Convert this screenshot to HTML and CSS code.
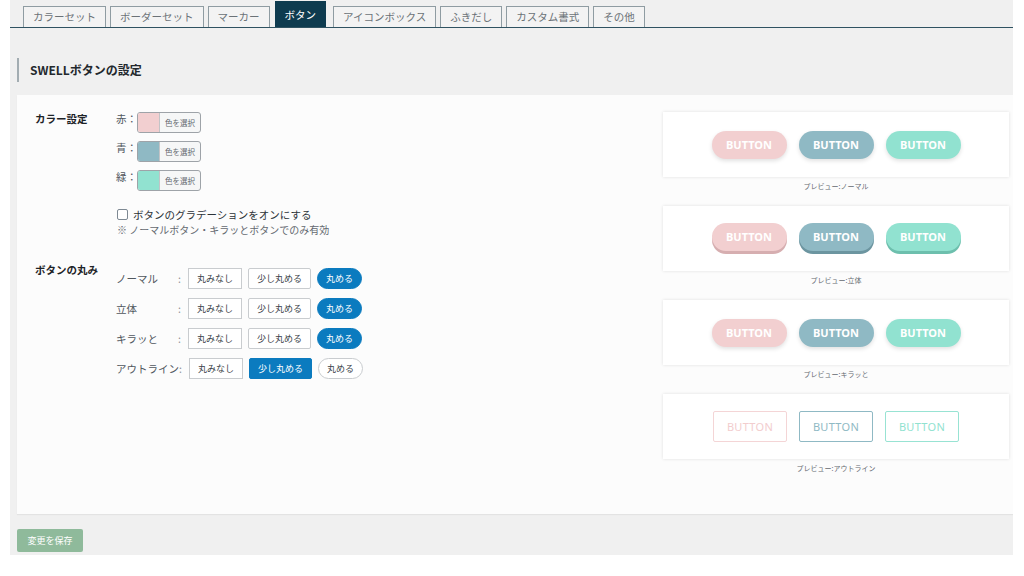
FILE: index.html
```html
<!DOCTYPE html>
<html lang="ja">
<head>
<meta charset="utf-8">
<title>SWELLボタンの設定</title>
<link rel="stylesheet" href="styles.css">
</head>
<body>
<div class="wrap">
  <nav class="tabs">
    <span class="tab">カラーセット</span>
    <span class="tab">ボーダーセット</span>
    <span class="tab">マーカー</span>
    <span class="tab active">ボタン</span>
    <span class="tab">アイコンボックス</span>
    <span class="tab">ふきだし</span>
    <span class="tab">カスタム書式</span>
    <span class="tab">その他</span>
  </nav>

  <h2 class="title">SWELLボタンの設定</h2>

  <section class="panel">
    <div class="settings">
      <div class="field">
        <div class="field-label">カラー設定</div>
        <div class="field-body">
          <div class="color-row">
            <span class="color-name">赤：</span>
            <span class="picker"><span class="swatch red"></span><span class="pick-text">色を選択</span></span>
          </div>
          <div class="color-row">
            <span class="color-name">青：</span>
            <span class="picker"><span class="swatch blue"></span><span class="pick-text">色を選択</span></span>
          </div>
          <div class="color-row">
            <span class="color-name">緑：</span>
            <span class="picker"><span class="swatch green"></span><span class="pick-text">色を選択</span></span>
          </div>
          <label class="check"><span class="box"></span>ボタンのグラデーションをオンにする</label>
          <p class="note">※ ノーマルボタン・キラッとボタンでのみ有効</p>
        </div>
      </div>

      <div class="field round">
        <div class="field-label">ボタンの丸み</div>
        <div class="field-body rows">
          <div class="r-row">
            <span class="r-name">ノーマル</span><span class="colon">:</span>
            <span class="opt sq">丸みなし</span><span class="opt sl">少し丸める</span><span class="opt pill on">丸める</span>
          </div>
          <div class="r-row">
            <span class="r-name">立体</span><span class="colon">:</span>
            <span class="opt sq">丸みなし</span><span class="opt sl">少し丸める</span><span class="opt pill on">丸める</span>
          </div>
          <div class="r-row">
            <span class="r-name">キラッと</span><span class="colon">:</span>
            <span class="opt sq">丸みなし</span><span class="opt sl">少し丸める</span><span class="opt pill on">丸める</span>
          </div>
          <div class="r-row">
            <span class="r-name">アウトライン</span><span class="colon">:</span>
            <span class="opt sq">丸みなし</span><span class="opt sl on">少し丸める</span><span class="opt pill">丸める</span>
          </div>
        </div>
      </div>
    </div>

    <div class="previews">
      <div class="pcard">
        <span class="btn red">BUTTON</span><span class="btn blue">BUTTON</span><span class="btn green">BUTTON</span>
      </div>
      <div class="caption">プレビュー:ノーマル</div>

      <div class="pcard solid">
        <span class="btn red">BUTTON</span><span class="btn blue">BUTTON</span><span class="btn green">BUTTON</span>
      </div>
      <div class="caption">プレビュー:立体</div>

      <div class="pcard">
        <span class="btn red">BUTTON</span><span class="btn blue">BUTTON</span><span class="btn green">BUTTON</span>
      </div>
      <div class="caption">プレビュー:キラッと</div>

      <div class="pcard line">
        <span class="obtn red">BUTTON</span><span class="obtn blue">BUTTON</span><span class="obtn green">BUTTON</span>
      </div>
      <div class="caption">プレビュー:アウトライン</div>
    </div>
  </section>

  <button class="save" type="button">変更を保存</button>
</div>
</body>
</html>
```

FILE: styles.css
```css
* { box-sizing: border-box; }

body {
  margin: 0;
  background: #fff;
  font-family: "Noto Sans CJK JP", "Noto Sans", sans-serif;
  color: #3c434a;
}

.wrap {
  margin-left: 10px;
  width: 1003px;
  height: 555px;
  background: #f0f0f0;
  overflow: hidden;
}

/* tabs */
.tabs {
  display: flex;
  align-items: flex-end;
  gap: 4px;
  height: 28px;
  padding-left: 13px;
  border-bottom: 1px solid #2f5261;
}
.tab {
  height: 21px;
  line-height: 19px;
  padding: 0 9px;
  border: 1px solid #8f9ca2;
  border-bottom: none;
  background: #f3f3f3;
  font-size: 10.5px;
  color: #6b7277;
  white-space: nowrap;
}
.tab.active {
  height: 26px;
  line-height: 25px;
  margin: 0 3px 0 1px;
  background: #0e3b4f;
  border-color: #0e3b4f;
  color: #fff;
}

/* header */
.title {
  margin: 30px 0 0 7px;
  height: 24px;
  line-height: 24px;
  padding-left: 11px;
  border-left: 2px solid #a3adb2;
  font-size: 12px;
  font-weight: bold;
  color: #23282d;
}

/* panel */
.panel {
  display: flex;
  margin: 13px 0 0 7px;
  width: 996px;
  height: 419px;
  background: #fcfcfc;
  box-shadow: 0 1px 1px rgba(0,0,0,.05);
}

.settings {
  flex: 1;
  padding: 17px 0 0 18px;
}
.field {
  display: flex;
  align-items: flex-start;
}
.field-label {
  width: 81px;
  line-height: 14px;
  font-size: 10.5px;
  font-weight: bold;
  color: #1d2327;
}
.field-body { flex: 1; }

.color-row {
  display: flex;
  align-items: flex-start;
  height: 21px;
  margin-bottom: 8px;
}
.color-name {
  width: 21px;
  line-height: 14px;
  font-size: 10.5px;
  color: #50575e;
}
.picker {
  display: flex;
  width: 64px;
  height: 21px;
  border: 1px solid #9ea3a8;
  border-radius: 3px;
  background: #f6f7f7;
  overflow: hidden;
}
.swatch {
  width: 22px;
  border-right: 1px solid #c3c4c7;
}
.swatch.red { background: #f2cfd0; }
.swatch.blue { background: #8fb9c4; }
.swatch.green { background: #91e2d0; }
.pick-text {
  flex: 1;
  text-align: center;
  font-size: 7.5px;
  line-height: 19px;
  color: #646970;
}

.check {
  display: flex;
  align-items: center;
  margin-top: 15px;
  height: 16px;
  font-size: 10.5px;
  color: #2c3338;
}
.box {
  width: 11px;
  height: 11px;
  margin: 0 5px 0 1px;
  border: 1px solid #7e8993;
  border-radius: 2px;
  background: #fff;
}
.note {
  margin: 0 0 0 1px;
  line-height: 16px;
  font-size: 10px;
  color: #646970;
}

.field.round { margin-top: 25px; }
.rows { padding-top: 5px; }
.r-row {
  display: flex;
  align-items: center;
  height: 21px;
  margin-bottom: 9px;
  font-size: 10.5px;
  color: #50575e;
  white-space: nowrap;
}
.r-name { flex: 0 0 auto; min-width: 62px; }
.colon { flex: 0 0 auto; width: 10px; color: #8c8f94; }
.opt {
  flex: 0 0 auto;
  height: 21px;
  line-height: 19px;
  padding: 0 8px;
  margin-right: 6px;
  border: 1px solid #c9cccf;
  background: #fff;
  font-size: 9px;
  color: #3c434a;
}
.opt.sq { border-radius: 0; }
.opt.sl { border-radius: 2px; }
.opt.pill { border-radius: 11px; }
.opt.on {
  background: #0b7bbf;
  border-color: #0b7bbf;
  color: #fff;
}

/* previews */
.previews {
  width: 346px;
  margin-right: 4px;
  padding-top: 17px;
}
.pcard {
  display: flex;
  justify-content: center;
  align-items: center;
  gap: 12px;
  height: 65px;
  background: #fff;
  box-shadow: 0 0 3px rgba(0,0,0,.12);
}
.caption {
  height: 29px;
  padding-top: 4px;
  line-height: 10px;
  text-align: center;
  font-size: 7px;
  color: #646970;
}

.btn {
  width: 75px;
  height: 28px;
  line-height: 28px;
  border-radius: 14px;
  text-align: center;
  font-family: "Noto Sans", sans-serif;
  font-weight: bold;
  font-size: 11px;
  color: #fff;
  box-shadow: 0 2px 4px rgba(0,0,0,.12);
}
.btn.red { background: #f2cfd0; }
.btn.blue { background: #8fb9c4; }
.btn.green { background: #91e2d0; }

.solid .btn { margin-top: -3px; }
.solid .btn.red { box-shadow: 0 3px 0 #d6aeb0; }
.solid .btn.blue { box-shadow: 0 3px 0 #6c95a0; }
.solid .btn.green { box-shadow: 0 3px 0 #6dbfad; }

.obtn {
  width: 74px;
  height: 31px;
  line-height: 29px;
  border: 1px solid;
  border-radius: 2px;
  text-align: center;
  font-family: "Noto Sans", sans-serif;
  font-size: 11px;
  letter-spacing: .3px;
}
.obtn.red { border-color: #f4d5d6; color: #f2cdce; }
.obtn.blue { border-color: #8fb9c4; color: #8fb9c4; }
.obtn.green { border-color: #98e3d3; color: #91e2d0; }

.save {
  display: block;
  margin: 15px 0 0 7px;
  width: 66px;
  height: 23px;
  padding: 0;
  border: none;
  border-radius: 2px;
  background: #8fba9b;
  color: #fff;
  font-family: "Noto Sans CJK JP", sans-serif;
  font-size: 9px;
}
```
